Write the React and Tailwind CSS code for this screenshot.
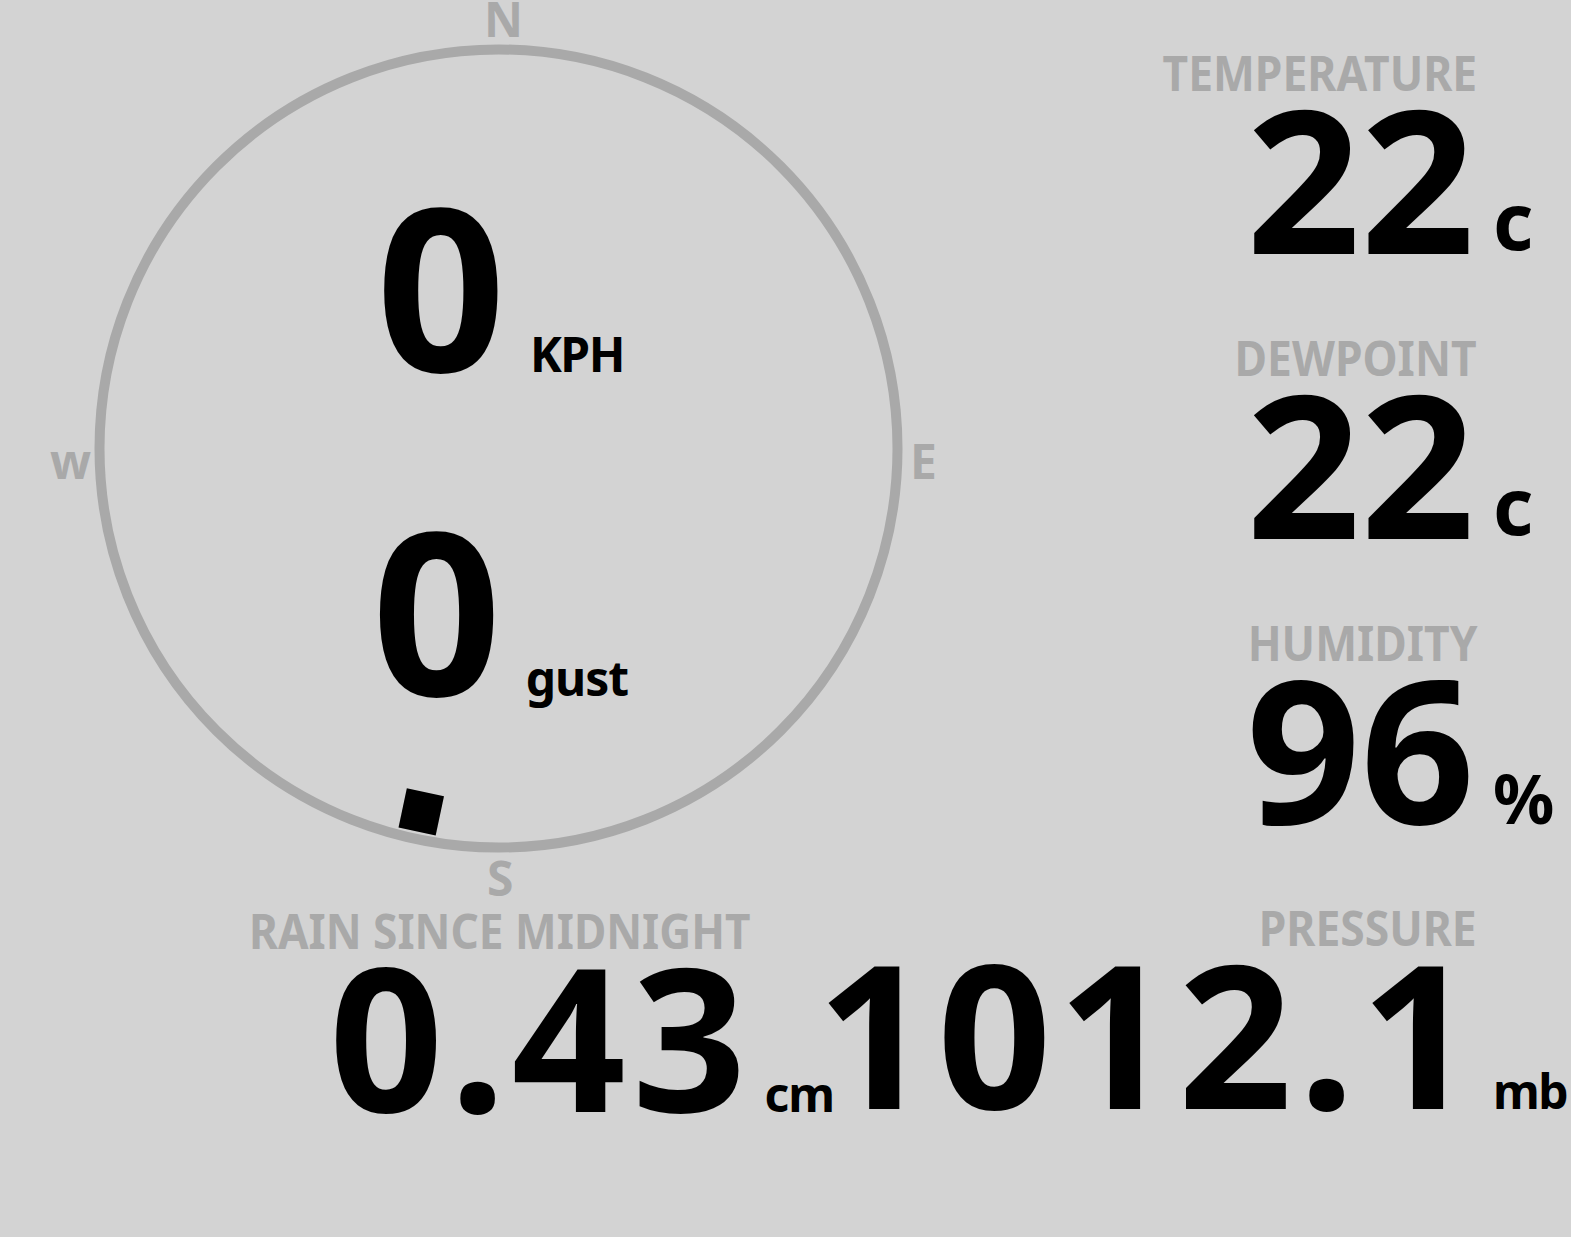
const LABEL = "text-[48px] leading-[48px] font-bold text-[#a9a9a9] whitespace-nowrap";

function Compass() {
  return (
    <div className="relative h-[904px] w-[1000px]">
      <svg className="absolute inset-0" width="1000" height="904" viewBox="0 0 1000 904">
        <circle cx="498.5" cy="448.5" r="399" fill="none" stroke="#a9a9a9" strokeWidth="10" />
        <rect x="479.5" y="57" width="38" height="40" fill="#000" transform="rotate(192 498.5 448.5)" />
      </svg>
      <span className={`absolute left-[484px] top-[-5px] ${LABEL}`}>N</span>
      <span className={`absolute left-[910px] top-[437px] ${LABEL}`}>E</span>
      <span className={`absolute left-[487px] top-[854px] ${LABEL}`}>S</span>
      <span className={`absolute left-[50px] top-[437px] ${LABEL}`}>w</span>

      <div className="relative flex flex-col items-center gap-[140px] pt-[194px]">
        <div className="flex items-baseline gap-6">
          <span className="text-[227px] leading-[180px] font-bold">0</span>
          <span className="text-[48px] leading-[48px] font-bold tracking-[-1.5px]">KPH</span>
        </div>
        <div className="flex items-baseline gap-6">
          <span className="text-[227px] leading-[180px] font-bold">0</span>
          <span className="text-[48px] leading-[48px] font-bold tracking-[-1px]">gust</span>
        </div>
      </div>
    </div>
  );
}

function Reading({ label, value, unit, valueClass = "", unitClass }) {
  return (
    <div className="h-[285px]">
      <div className="flex w-[475px] justify-end">
        <span className={`${LABEL} inline-block origin-right scale-x-[0.925] mr-[-2px]`}>{label}</span>
      </div>
      <div className="flex items-baseline gap-[18px]">
        <div className="flex w-[475px] justify-end">
          <span className={`text-[200px] leading-[160px] font-bold whitespace-nowrap ${valueClass}`}>{value}</span>
        </div>
        <span className={`font-bold ${unitClass}`}>{unit}</span>
      </div>
    </div>
  );
}

export default function App() {
  return (
    <div className="relative h-[1237px] w-[1571px] overflow-hidden bg-[#d3d3d3] font-['Noto_Sans',sans-serif] text-black">
      <div className="flex">
        <Compass />
        <div className="flex-1 pt-[49px]">
          <Reading label="TEMPERATURE" value="22" unit="c" unitClass="relative -top-[4px] text-[78px] leading-[78px]" />
          <Reading label="DEWPOINT" value="22" unit="c" unitClass="relative -top-[4px] text-[78px] leading-[78px]" />
          <Reading label="HUMIDITY" value="96" unit="%" unitClass="text-[68px] leading-[68px]" />
        </div>
      </div>
      <div className="flex">
        <div className="w-[1000px] pt-[3px]">
          <div className="pl-[249px]">
            <span className={`${LABEL} inline-block origin-left scale-x-[0.92]`}>RAIN SINCE MIDNIGHT</span>
          </div>
          <div className="flex items-baseline gap-[18px] pl-[329px]">
            <span className="text-[200px] leading-[160px] font-bold tracking-[6px] mr-[-6px]">0.43</span>
            <span className="text-[48px] leading-[48px] font-bold tracking-[-1px]">cm</span>
          </div>
        </div>
        <div className="flex-1">
          <Reading
            label="PRESSURE"
            value="1012.1"
            valueClass="tracking-[6px] mr-[-6px]"
            unit="mb"
            unitClass="text-[48px] leading-[48px] tracking-[-1.5px]"
          />
        </div>
      </div>
    </div>
  );
}
